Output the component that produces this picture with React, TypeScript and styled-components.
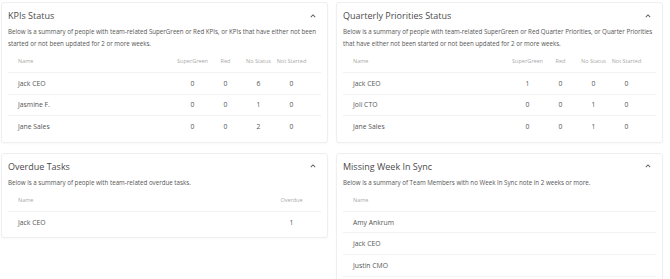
import React from "react"
import styled, { createGlobalStyle } from "styled-components"

const GlobalStyle = createGlobalStyle`
  html, body {
    margin: 0;
    padding: 0;
    background: #fff;
    font-family: "Open Sans", "Noto Sans", sans-serif;
    color: #444;
  }
  * { box-sizing: border-box; }
`

interface Row {
  name: string
  values?: number[]
}

interface CardData {
  title: string
  description: string
  columns: string[]
  rows: Row[]
  openEnded?: boolean
}

const cards: CardData[] = [
  {
    title: "KPIs Status",
    description:
      "Below is a summary of people with team-related SuperGreen or Red KPIs, or KPIs that have either not been started or not been updated for 2 or more weeks.",
    columns: ["SuperGreen", "Red", "No Status", "Not Started"],
    rows: [
      { name: "Jack CEO", values: [0, 0, 6, 0] },
      { name: "Jasmine F.", values: [0, 0, 1, 0] },
      { name: "Jane Sales", values: [0, 0, 2, 0] },
    ],
  },
  {
    title: "Quarterly Priorities Status",
    description:
      "Below is a summary of people with team-related SuperGreen or Red Quarter Priorities, or Quarter Priorities that have either not been started or not been updated for 2 or more weeks.",
    columns: ["SuperGreen", "Red", "No Status", "Not Started"],
    rows: [
      { name: "Jack CEO", values: [1, 0, 0, 0] },
      { name: "Joli CTO", values: [0, 0, 1, 0] },
      { name: "Jane Sales", values: [0, 0, 1, 0] },
    ],
  },
  {
    title: "Overdue Tasks",
    description: "Below is a summary of people with team-related overdue tasks.",
    columns: ["Overdue"],
    rows: [{ name: "Jack CEO", values: [1] }],
  },
  {
    title: "Missing Week In Sync",
    description: "Below is a summary of Team Members with no Week In Sync note in 2 weeks or more.",
    columns: [],
    rows: [{ name: "Amy Ankrum" }, { name: "Jack CEO" }, { name: "Justin CMO" }],
    openEnded: true,
  },
]

const ChevronUp = () => (
  <svg width="10" height="10" viewBox="0 0 24 24" fill="#555">
    <path d="M12 8l-6 6 1.41 1.41L12 10.83l4.59 4.58L18 14z" />
  </svg>
)

const SummaryCard: React.FC<{ card: CardData }> = ({ card }) => {
  const { title, description, columns, rows, openEnded } = card
  return (
    <S.Card>
      <S.CardHeader>
        <S.Title>{title}</S.Title>
        <S.Toggle>
          <ChevronUp />
        </S.Toggle>
      </S.CardHeader>
      <S.Description>{description}</S.Description>
      <S.HeadRow cols={columns.length}>
        <S.NameCell>Name</S.NameCell>
        {columns.map((c) => (
          <S.ValueCell key={c}>{c}</S.ValueCell>
        ))}
      </S.HeadRow>
      {rows.map((r) => (
        <S.BodyRow key={r.name} cols={columns.length} openEnded={!!openEnded}>
          <S.NameCell>{r.name}</S.NameCell>
          {(r.values || []).map((v, i) => (
            <S.ValueCell key={i}>{v}</S.ValueCell>
          ))}
        </S.BodyRow>
      ))}
    </S.Card>
  )
}

export default function App() {
  return (
    <>
      <GlobalStyle />
      <S.Page>
        {cards.map((c) => (
          <SummaryCard key={c.title} card={c} />
        ))}
      </S.Page>
    </>
  )
}

const rowColumns = (cols: number) => `1fr${" 33px".repeat(cols)}`

const S = {
  Page: styled.div`
    display: grid;
    grid-template-columns: 327px 327px;
    column-gap: 8px;
    row-gap: 10px;
    align-items: start;
    padding: 2px 0 0 1px;
    height: 279px;
    overflow: hidden;
  `,
  Card: styled.div`
    background: #fff;
    border: 1px solid #efefef;
    border-radius: 3px;
    box-shadow: 0 1px 2px rgba(0, 0, 0, 0.03);
    padding: 5px 6px 4px 6px;
  `,
  CardHeader: styled.div`
    display: flex;
    align-items: center;
    justify-content: space-between;
    height: 15px;
  `,
  Title: styled.div`
    font-size: 9px;
    line-height: 15px;
    color: #4a4a4a;
  `,
  Toggle: styled.div`
    display: flex;
    margin-right: 3px;
  `,
  Description: styled.div`
    margin-top: 3px;
    font-size: 6.2px;
    line-height: 12px;
    color: #555;
  `,
  HeadRow: styled.div<{ cols: number }>`
    display: grid;
    grid-template-columns: ${({ cols }) => rowColumns(cols)};
    align-items: center;
    height: 23px;
    padding: 0 13px 0 10px;
    border-bottom: 1px solid #f2f2f2;
    font-size: 5.5px;
    color: #aaa;
  `,
  BodyRow: styled.div<{ cols: number; openEnded: boolean }>`
    display: grid;
    grid-template-columns: ${({ cols }) => rowColumns(cols)};
    align-items: center;
    height: 21.6px;
    padding: 0 13px 0 10px;
    border-bottom: 1px solid #f2f2f2;
    font-size: 6.8px;
    color: #555;
    &:last-child {
      border-bottom: ${({ openEnded }) => (openEnded ? "1px solid #f2f2f2" : "none")};
    }
  `,
  NameCell: styled.div`
    white-space: nowrap;
  `,
  ValueCell: styled.div`
    text-align: center;
    white-space: nowrap;
  `,
}
